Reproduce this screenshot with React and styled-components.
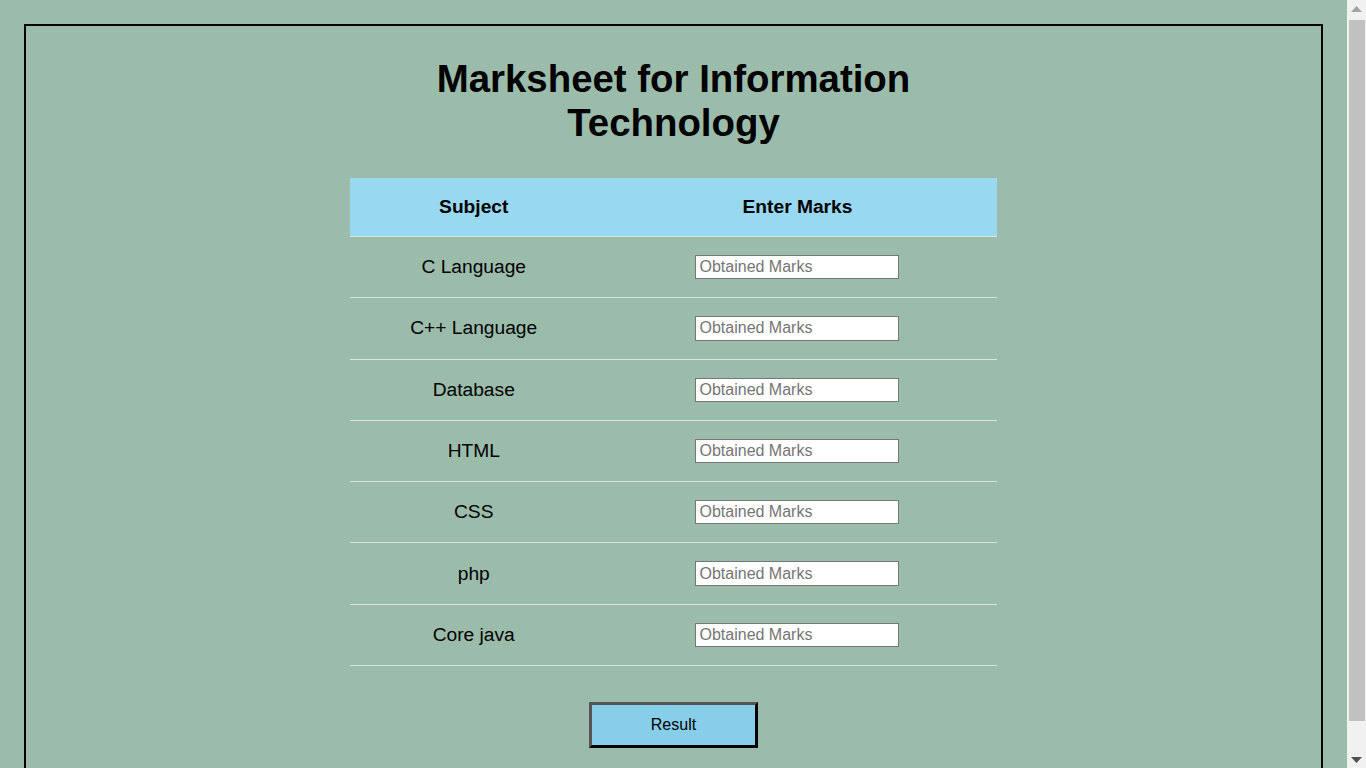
import React from "react";
import styled, { createGlobalStyle } from "styled-components";

const GlobalStyle = createGlobalStyle`
  html, body {
    margin: 0;
    padding: 0;
    background: rgb(155, 188, 171);
    font-family: "Liberation Sans", Arial, sans-serif;
    color: #000;
  }
`;

const Page = styled.div`
  padding-right: 19px;
`;

const Frame = styled.div`
  margin: 24px;
  border: 2px solid #000;
  padding: 31px 0 30px;
  display: flex;
  flex-direction: column;
  align-items: center;
`;

const Title = styled.h1`
  width: 50%;
  margin: 0 0 33px;
  font-size: 38.4px;
  line-height: 44px;
  font-weight: bold;
  text-align: center;
`;

const Table = styled.table`
  width: 50%;
  border-collapse: collapse;
`;

const HeadCell = styled.th`
  background: rgb(152, 216, 240);
  padding: 18px 0;
  font-size: 19.2px;
  line-height: 22px;
  font-weight: bold;
  text-align: center;
  width: ${(p) => p.$w || "auto"};
`;

const Row = styled.tr`
  border-top: 1px solid #dde3df;
  &:last-child {
    border-bottom: 1px solid #dde3df;
  }
`;

const Cell = styled.td`
  padding: 18px 0;
  font-size: 19.2px;
  line-height: 22px;
  text-align: center;
  vertical-align: middle;
`;

const MarkInput = styled.input`
  box-sizing: border-box;
  width: 204px;
  height: 24.3px;
  border: 1px solid #767676;
  padding: 1px 3px;
  background: #fff;
  font-family: "Liberation Sans", Arial, sans-serif;
  font-size: 16px;
  display: block;
  margin: 0 auto;
  &::placeholder {
    color: #757575;
  }
`;

const ResultButton = styled.button`
  margin-top: 36px;
  width: 169px;
  height: 46px;
  background: rgb(135, 206, 235);
  border-style: solid;
  border-width: 3px;
  border-color: #555 #000 #000 #555;
  font-family: "Liberation Sans", Arial, sans-serif;
  font-size: 16px;
  color: #000;
  cursor: pointer;
`;

/* Fake browser scrollbar drawn over the right edge */
const ScrollBar = styled.div`
  position: fixed;
  top: 0;
  right: 0;
  width: 19px;
  height: 100vh;
  background: #f1f1f1;
  display: flex;
  flex-direction: column;
  align-items: center;
`;

const Arrow = styled.div`
  height: 17px;
  width: 100%;
  display: flex;
  align-items: center;
  justify-content: center;
`;

const Thumb = styled.div`
  margin-top: 3px;
  width: 16px;
  height: 701px;
  background: #c1c1c1;
`;

const Spacer = styled.div`
  flex: 1;
`;

const subjects = [
  "C Language",
  "C++ Language",
  "Database",
  "HTML",
  "CSS",
  "php",
  "Core java",
];

export default function App() {
  return (
    <>
      <GlobalStyle />
      <Page>
        <Frame>
          <Title>Marksheet for Information Technology</Title>
          <Table>
            <thead>
              <tr>
                <HeadCell $w="38.3%">Subject</HeadCell>
                <HeadCell>Enter Marks</HeadCell>
              </tr>
            </thead>
            <tbody>
              {subjects.map((s) => (
                <Row key={s}>
                  <Cell>{s}</Cell>
                  <Cell>
                    <MarkInput type="text" placeholder="Obtained Marks" />
                  </Cell>
                </Row>
              ))}
            </tbody>
          </Table>
          <ResultButton>Result</ResultButton>
        </Frame>
      </Page>
      <ScrollBar>
        <Arrow>
          <svg width="11" height="6" viewBox="0 0 11 6">
            <polygon points="0,6 11,6 5.5,0" fill="#a3a3a3" />
          </svg>
        </Arrow>
        <Thumb />
        <Spacer />
        <Arrow>
          <svg width="11" height="6" viewBox="0 0 11 6">
            <polygon points="0,0 11,0 5.5,6" fill="#505050" />
          </svg>
        </Arrow>
      </ScrollBar>
    </>
  );
}
